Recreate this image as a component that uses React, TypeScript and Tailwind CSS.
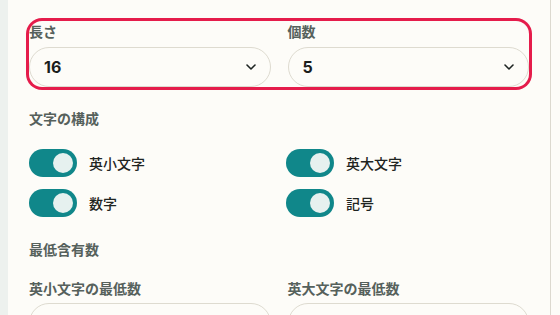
import React from "react";

const jp = { fontFamily: '"Noto Sans CJK JP", "Noto Sans", sans-serif' };
const num = { fontFamily: 'Inter, "Noto Sans CJK JP", sans-serif' };

function Chevron() {
  return (
    <svg width="10" height="6" viewBox="0 0 10 6" fill="none" className="text-[#1e2422]">
      <path d="M1 1l4 4 4-4" stroke="currentColor" strokeWidth="1.6" strokeLinecap="round" strokeLinejoin="round" />
    </svg>
  );
}

function SelectField({ label, value }: { label: string; value: string }) {
  return (
    <div className="flex flex-col">
      <div className="text-[14px] leading-[20px] font-bold text-[#56615c] mb-[6px]">{label}</div>
      <div className="h-[40px] rounded-full border border-[#dedbd0] bg-[#fdfcf8] flex items-center justify-between pl-[14px] pr-[14px]">
        <span style={num} className="text-[16px] font-bold text-[#1a1d1c]">
          {value}
        </span>
        <Chevron />
      </div>
    </div>
  );
}

function Toggle({ label }: { label: string }) {
  return (
    <div className="flex items-center gap-[12px]">
      <div className="w-[48px] h-[28px] rounded-full bg-[#10878a] flex items-center justify-end pr-[4px]">
        <div className="w-[20px] h-[20px] rounded-full bg-[#e6f1ef]" />
      </div>
      <span className="text-[14px] font-medium text-[#1f2422]">{label}</span>
    </div>
  );
}

export default function App() {
  return (
    <div style={jp} className="w-[560px] h-[315px] overflow-hidden flex bg-[#fdfcf8]">
      <div className="w-[8px] bg-[#edf1ee] shrink-0" />
      <div className="w-[543px] shrink-0 border-r border-[#dcd9cf] px-[21px] pt-[21px]">
        <div className="grid grid-cols-2 gap-x-[17px] rounded-[13px] ring-[3px] ring-[#e51c4b]">
          <SelectField label="長さ" value="16" />
          <SelectField label="個数" value="5" />
        </div>

        <div className="mt-[21px] text-[14px] leading-[20px] font-bold text-[#56615c]">文字の構成</div>
        <div className="mt-[21px] grid grid-cols-2 gap-x-[14px] gap-y-[12px]">
          <Toggle label="英小文字" />
          <Toggle label="英大文字" />
          <Toggle label="数字" />
          <Toggle label="記号" />
        </div>

        <div className="mt-[22px] text-[14px] leading-[20px] font-bold text-[#56615c]">最低含有数</div>
        <div className="mt-[19px] grid grid-cols-2 gap-x-[17px]">
          <div className="flex flex-col">
            <div className="text-[14px] leading-[20px] font-bold text-[#56615c] mb-[5px]">英小文字の最低数</div>
            <div className="h-[40px] rounded-full border border-[#dedbd0] bg-[#fdfcf8]" />
          </div>
          <div className="flex flex-col">
            <div className="text-[14px] leading-[20px] font-bold text-[#56615c] mb-[5px]">英大文字の最低数</div>
            <div className="h-[40px] rounded-full border border-[#dedbd0] bg-[#fdfcf8]" />
          </div>
        </div>
      </div>
      <div className="flex-1" />
    </div>
  );
}
